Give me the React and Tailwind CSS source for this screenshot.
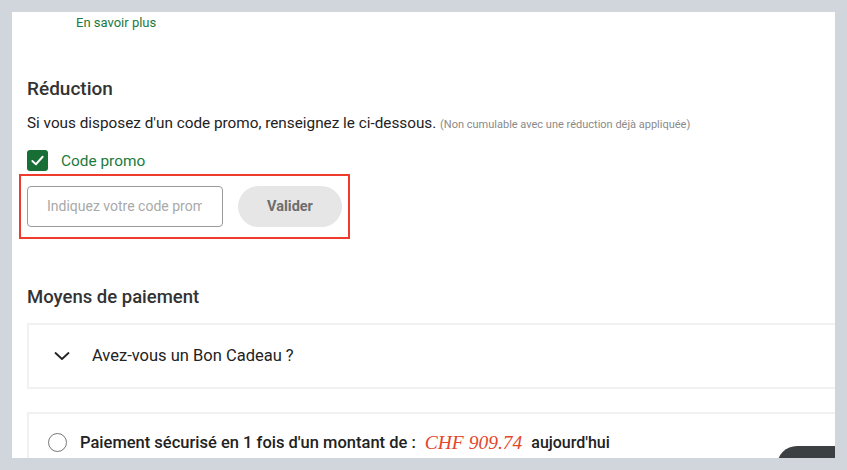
import React from "react";

export default function App() {
  return (
    <div className="w-[847px] h-[470px] bg-[#d1d5dc] pt-[12px] pl-[12px] overflow-hidden" style={{ fontFamily: "Roboto, 'Liberation Sans', sans-serif" }}>
      <div className="w-[823px] h-[446px] bg-white overflow-hidden relative">
        <div className="pl-[64px] pt-[2px] text-[13px] leading-[18px] text-[#1b7a3e]">En savoir plus</div>
        <div className="pl-[15px]">
          <h2 className="mt-[46px] text-[19px] leading-[22px] font-medium text-[#333]">Réduction</h2>
          <p className="mt-[13px] text-[15.3px] leading-[20px] text-[#222] whitespace-nowrap">
            Si vous disposez d'un code promo, renseignez le ci-dessous.{" "}
            <span className="text-[11px] text-[#8a8a8a]">(Non cumulable avec une réduction déjà appliquée)</span>
          </p>
          <div className="mt-[15px] flex items-center gap-[13px]">
            <div className="w-[21px] h-[21px] rounded-[3px] bg-[#186f36] flex items-center justify-center">
              <svg width="15" height="15" viewBox="0 0 16 16" fill="none">
                <path d="M2.5 8.5 L6.3 12 L13.5 4" stroke="white" strokeWidth="2" strokeLinecap="round" strokeLinejoin="round" />
              </svg>
            </div>
            <span className="text-[15.4px] leading-[20px] text-[#1b7a3e]">Code promo</span>
          </div>
          <div className="ml-[-8px] mt-[3px] w-[331px] h-[65px] border-2 border-[#ef3b2d] flex items-center pl-[6px] gap-[15px]">
            <div className="w-[196px] h-[41px] border border-[#9a9a9a] rounded-[4px] flex items-center pl-[19px] pr-[20px] overflow-hidden">
              <span className="block overflow-hidden text-[14px] text-[#a9a9a9] whitespace-nowrap">Indiquez votre code promo</span>
            </div>
            <div className="w-[104px] h-[41px] rounded-full bg-[#e6e6e6] flex items-center justify-center text-[14.5px] font-bold text-[#6e6e6e]">Valider</div>
          </div>
          <h2 className="mt-[47px] text-[18.5px] leading-[22px] font-medium text-[#333]">Moyens de paiement</h2>
          <div className="mt-[15px] w-[900px] h-[66px] border-2 border-[#f1f1f1] flex items-center pl-[24px] gap-[21px]">
            <svg width="18" height="12" viewBox="0 0 18 12" fill="none">
              <path d="M2.5 3 L9 9 L15.5 3" stroke="#222" strokeWidth="1.8" strokeLinecap="round" strokeLinejoin="round" />
            </svg>
            <span className="text-[16.5px] text-[#222]">Avez-vous un Bon Cadeau ?</span>
          </div>
          <div className="mt-[23px] w-[900px] h-[80px] border-2 border-[#f1f1f1] flex items-start pl-[19px] pt-[19px]">
            <div className="w-[19px] h-[19px] rounded-full border-[1.5px] border-[#777] mr-[13px]" />
            <span className="text-[16.5px] leading-[20px] font-medium text-[#222] whitespace-nowrap">
              Paiement sécurisé en 1 fois d'un montant de :
            </span>
            <span className="ml-[9px] text-[19.5px] leading-[20px] italic text-[#e2472b] whitespace-nowrap" style={{ fontFamily: "'Liberation Serif', serif" }}>CHF 909.74</span>
            <span className="ml-[9px] text-[16px] leading-[20px] font-medium text-[#222]">aujourd'hui</span>
          </div>
        </div>
        <div className="absolute right-[-20px] bottom-[-30px] w-[78px] h-[42px] rounded-[20px] bg-[#3c4043]" />
      </div>
    </div>
  );
}
